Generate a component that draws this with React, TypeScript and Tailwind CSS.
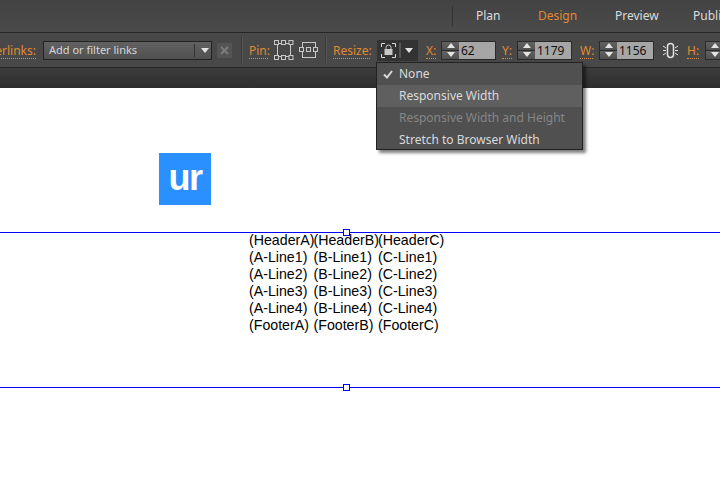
const uiFont = { fontFamily: '"Noto Sans", "DejaVu Sans", sans-serif' };

function Label({ children, className = "" }: { children: React.ReactNode; className?: string }) {
  return (
    <span className={`shrink-0 mt-[2px] text-[12px] leading-[15px] text-[#e08a33] border-b border-dotted border-[#e08a33] ${className}`}>
      {children}
    </span>
  );
}

function Arrow({ up = false, className = "" }: { up?: boolean; className?: string }) {
  return (
    <svg width="8" height="5" viewBox="0 0 8 5" className={`shrink-0 ${className}`}>
      <path d={up ? "M4 0 8 5H0z" : "M0 0h8L4 5z"} fill="#e4e4e4" />
    </svg>
  );
}

function Stepper({ value }: { value?: string }) {
  return (
    <div className="flex shrink-0 h-[19px] border border-[#2a2a2a] bg-[#2a2a2a]">
      <div className="flex flex-col w-[17px] gap-px">
        <div className="flex-1 flex items-center justify-center bg-gradient-to-b from-[#626262] to-[#505050]"><Arrow up /></div>
        <div className="flex-1 flex items-center justify-center bg-gradient-to-b from-[#626262] to-[#505050]"><Arrow /></div>
      </div>
      {value && (
        <div className="w-[36px] bg-[#a6a6a6] text-[12px] leading-[17px] text-[#111] pl-[2px]">{value}</div>
      )}
    </div>
  );
}

function PinAll() {
  return (
    <svg width="20" height="20" viewBox="0 0 20 20" fill="#484848" stroke="#c8c8c8" className="shrink-0">
      <path d="M3.500 3.500v13M16.500 3.500v13M3.500 3.500h13M3.500 16.500h13" />
      <rect x="0.500" y="0.500" width="4" height="4" />
      <rect x="7.500" y="0.500" width="4" height="4" />
      <rect x="15" y="0.500" width="4" height="4" />
      <rect x="0.500" y="15.500" width="4" height="4" />
      <rect x="7.500" y="15.500" width="4" height="4" />
      <rect x="15" y="15.500" width="4" height="4" />
    </svg>
  );
}

function PinCenter() {
  return (
    <svg width="20" height="18" viewBox="0 0 20 18" fill="#484848" stroke="#c8c8c8" className="shrink-0">
      <rect x="3.500" y="1.500" width="13" height="15" />
      <rect x="0.500" y="6.500" width="4" height="4" />
      <rect x="7.500" y="6.500" width="4" height="4" />
      <rect x="14.500" y="6.500" width="4" height="4" />
    </svg>
  );
}

function ResizeLock() {
  return (
    <svg width="15" height="15" viewBox="0 0 15 15" fill="none" className="shrink-0">
      <path d="M.5 4V.5H4M11 .5h3.500V4M.5 11v3.500H4M11 14.500h3.500V11" stroke="#d8d8d8" />
      <path d="M5 6V4.500a2.500 2.500 0 0 1 5 0V6" stroke="#c8c8c8" />
      <rect x="3.500" y="6" width="8" height="6" fill="#c8c8c8" />
    </svg>
  );
}

function LinkIcon() {
  return (
    <svg width="17" height="17" viewBox="0 0 17 17" fill="none" stroke="#e2e2e2" className="shrink-0">
      <rect x="5.500" y="1.500" width="6" height="14" rx="3" strokeWidth="1.500" />
      <path d="M1 4l3 2M1 8.500h3M1 13l3-2M16 4l-3 2M16 8.500h-3M16 13l-3-2" />
    </svg>
  );
}

function Sep() {
  return <div className="shrink-0 w-[2px] h-[26px] bg-[#3a3a3a] border-r border-[#555]" />;
}

const menuItems = [
  { label: "None", checked: true },
  { label: "Responsive Width", hover: true },
  { label: "Responsive Width and Height", disabled: true },
  { label: "Stretch to Browser Width" },
];

const rows = [
  ["(HeaderA)", "(HeaderB)", "(HeaderC)"],
  ["(A-Line1)", "(B-Line1)", "(C-Line1)"],
  ["(A-Line2)", "(B-Line2)", "(C-Line2)"],
  ["(A-Line3)", "(B-Line3)", "(C-Line3)"],
  ["(A-Line4)", "(B-Line4)", "(C-Line4)"],
  ["(FooterA)", "(FooterB)", "(FooterC)"],
];

export default function App() {
  return (
    <div className="relative w-[720px] h-[480px] overflow-hidden bg-white">
      <div style={uiFont} className="flex flex-col">
        {/* top tabs */}
        <div className="flex items-center h-[32px] bg-gradient-to-b from-[#434343] to-[#4a4a4a] border-b border-[#262626] box-content text-[12px] text-[#dcdcdc] whitespace-nowrap overflow-hidden pl-[452px]">
          <div className="shrink-0 w-px h-[20px] bg-[#333] mr-[23px]" />
          <span className="w-[62px] shrink-0">Plan</span>
          <span className="w-[77px] shrink-0 text-[#e08a33]">Design</span>
          <span className="w-[78px] shrink-0">Preview</span>
          <span className="shrink-0">Publish</span>
        </div>

        {/* control bar */}
        <div className="flex items-center h-[34px] bg-[#484848] border-b border-[#262626] box-content whitespace-nowrap overflow-hidden">
          <div className="flex justify-end w-[36px] shrink-0 overflow-hidden">
            <Label>Hyperlinks:</Label>
          </div>
          <div className="flex items-center shrink-0 ml-[7px] w-[169px] h-[19px] border border-[#222] bg-gradient-to-b from-[#626262] to-[#505050] text-[11px] text-[#d6d6d6] pl-[5px]">
            <span className="w-[145px]">Add or filter links</span>
            <div className="w-px h-[13px] bg-[#333] mr-[6px]" />
            <Arrow />
          </div>
          <div className="flex items-center justify-center shrink-0 ml-[5px] w-[15px] h-[15px] bg-[#545454]">
            <svg width="9" height="9" viewBox="0 0 9 9"><path d="M1 1l7 7M8 1 1 8" stroke="#7c7c7c" strokeWidth="2" /></svg>
          </div>
          <div className="ml-[9px] mr-[6px]"><Sep /></div>
          <Label className="w-[19px]">Pin:</Label>
          <div className="ml-[6px]"><PinAll /></div>
          <div className="ml-[5px]"><PinCenter /></div>
          <div className="ml-[6px] mr-[6px]"><Sep /></div>
          <Label className="w-[37px]">Resize:</Label>
          <div className="flex items-center shrink-0 ml-[7px] w-[41px] h-[21px] bg-[#333] pl-[4px]">
            <ResizeLock />
            <div className="w-[2px] h-[15px] ml-[3px] mr-[4px] bg-[#555]" />
            <Arrow />
          </div>
          <Label className="ml-[8px] w-[10px]">X:</Label>
          <div className="ml-[5px]"><Stepper value="62" /></div>
          <Label className="ml-[6px] w-[10px]">Y:</Label>
          <div className="ml-[5px]"><Stepper value="1179" /></div>
          <Label className="ml-[8px] w-[13px]">W:</Label>
          <div className="ml-[6px]"><Stepper value="1156" /></div>
          <div className="ml-[8px]"><LinkIcon /></div>
          <Label className="ml-[8px] w-[12px]">H:</Label>
          <div className="ml-[6px]"><Stepper /></div>
        </div>

        {/* dark strip */}
        <div className="h-[20px] bg-gradient-to-b from-[#3c3c3c] to-[#2e2e2e]" />
      </div>

      {/* resize menu */}
      <div style={uiFont} className="absolute left-[376px] top-[62px] w-[207px] h-[88px] overflow-hidden border border-[#222] bg-[#505050] shadow-[3px_3px_3px_rgba(0,0,0,0.5)] text-[12px] z-10">
        {menuItems.map((item) => (
          <div
            key={item.label}
            className={`flex items-center h-[22px] ${item.hover ? "bg-[#5f5f5f]" : ""} ${item.disabled ? "text-[#868686]" : "text-[#dadada]"}`}
          >
            <div className="w-[22px] flex justify-center">
              {item.checked && (
                <svg width="10" height="9" viewBox="0 0 10 9"><path d="M1 4.500l3 3 5-6.500" fill="none" stroke="#d8d8d8" strokeWidth="2" /></svg>
              )}
            </div>
            {item.label}
          </div>
        ))}
      </div>

      {/* canvas */}
      <div className="absolute left-[159px] top-[153px] w-[52px] h-[52px] bg-[#2b90ff] flex items-center justify-center text-white font-bold text-[36px] leading-none tracking-[-1.500px] pb-[3px]" style={{ fontFamily: '"Liberation Sans", sans-serif' }}>
        ur
      </div>

      <div className="absolute left-0 top-[232px] w-full h-px bg-[#0000ff]" />
      <div className="absolute left-0 top-[387px] w-full h-px bg-[#0000ff]" />
      <div className="absolute left-[343px] top-[229px] w-[7px] h-[7px] bg-white border border-[#0000ff]" />
      <div className="absolute left-[343px] top-[384px] w-[7px] h-[7px] bg-white border border-[#0000ff]" />

      <div className="absolute left-[249px] top-[232px] grid grid-cols-[64.500px_64.500px_auto] text-[14.200px] leading-[17px] text-black" style={{ fontFamily: '"Liberation Sans", sans-serif' }}>
        {rows.flat().map((cell) => (
          <div key={cell}>{cell}</div>
        ))}
      </div>
    </div>
  );
}
